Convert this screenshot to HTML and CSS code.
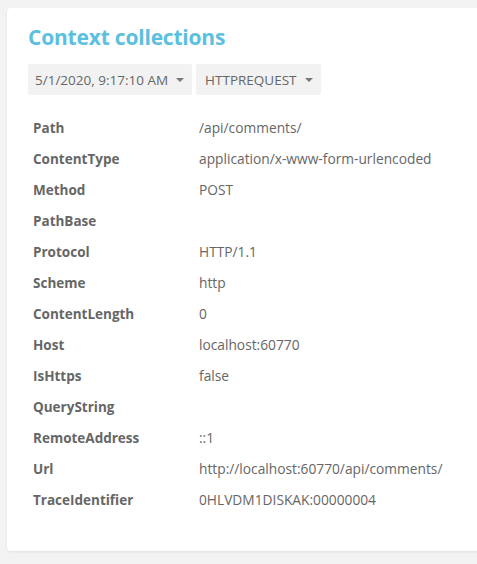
FILE: index.html
```html
<!DOCTYPE html>
<html>
<head>
<meta charset="utf-8">
<link rel="stylesheet" href="styles.css">
</head>
<body>
<div class="card">
  <h2 class="title">Context collections</h2>
  <div class="toolbar">
    <button class="dd">5/1/2020, 9:17:10 AM<span class="caret"></span></button>
    <button class="dd">HTTPREQUEST<span class="caret"></span></button>
  </div>
  <table class="props">
    <tr><th>Path</th><td>/api/comments/</td></tr>
    <tr><th>ContentType</th><td>application/x-www-form-urlencoded</td></tr>
    <tr><th>Method</th><td>POST</td></tr>
    <tr><th>PathBase</th><td></td></tr>
    <tr><th>Protocol</th><td>HTTP/1.1</td></tr>
    <tr><th>Scheme</th><td>http</td></tr>
    <tr><th>ContentLength</th><td>0</td></tr>
    <tr><th>Host</th><td>localhost:60770</td></tr>
    <tr><th>IsHttps</th><td>false</td></tr>
    <tr><th>QueryString</th><td></td></tr>
    <tr><th>RemoteAddress</th><td>::1</td></tr>
    <tr><th>Url</th><td>http://localhost:60770/api/comments/</td></tr>
    <tr><th>TraceIdentifier</th><td>0HLVDM1DISKAK:00000004</td></tr>
  </table>
</div>
</body>
</html>
```
FILE: styles.css
```css
html, body {
  margin: 0;
  padding: 0;
  background: #f3f3f3;
  font-family: "Open Sans", "Noto Sans", sans-serif;
  color: #666;
}
body {
  padding: 8px 0 0 7px;
  overflow: hidden;
  height: 564px;
  box-sizing: border-box;
}
.card {
  width: 490px;
  background: #fff;
  border-radius: 4px;
  box-shadow: 0 1px 3px rgba(0,0,0,0.08);
  padding: 14px 21px 36px;
  box-sizing: border-box;
}
.title {
  margin: 0;
  font-size: 21px;
  font-weight: 700;
  color: #5bc0de;
  line-height: 30px;
  letter-spacing: -0.2px;
}
.toolbar {
  display: flex;
  gap: 4px;
  margin-top: 12px;
}
.dd {
  display: flex;
  align-items: center;
  height: 31px;
  padding: 0 8px 0 7px;
  border: 0;
  border-radius: 2px;
  background: #f2f2f2;
  color: #666;
  font-family: inherit;
  font-size: 13.5px;
}
.dd + .dd {
  padding-left: 9px;
}
.caret {
  margin-left: 8px;
  width: 0;
  height: 0;
  border-left: 4px solid transparent;
  border-right: 4px solid transparent;
  border-top: 4px solid #777;
}
.props {
  margin-top: 17px;
  border-collapse: collapse;
}
.props th, .props td {
  height: 31px;
  padding: 0 5px;
  text-align: left;
  vertical-align: middle;
}
.props th {
  width: 156px;
  font-weight: 700;
  font-size: 13.5px;
  color: #666;
}
.props td {
  font-size: 13.75px;
  color: #666;
}
```
